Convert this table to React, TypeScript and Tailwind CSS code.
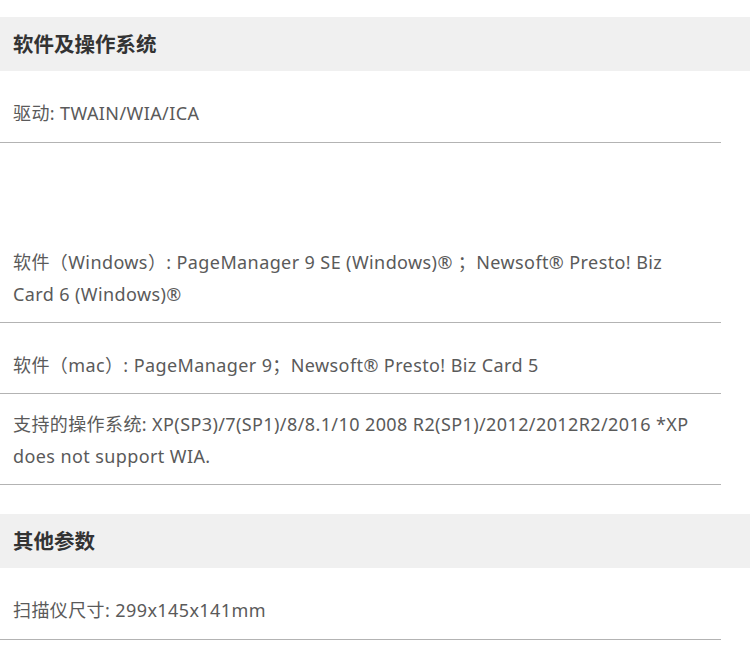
import React from "react";

const font = {
  fontFamily: '"Segoe UI", "Noto Sans", "Noto Sans CJK SC", sans-serif',
};

function Header({ title, className = "" }: { title: string; className?: string }) {
  return (
    <div className={`h-[54px] bg-[#f0f0f0] flex items-center px-[13px] ${className}`}>
      <h3 className="text-[20.5px] font-bold text-[#333333] leading-none">{title}</h3>
    </div>
  );
}

function Row({ children, pt, pb = "pb-[12px]" }: { children: React.ReactNode; pt: string; pb?: string }) {
  return (
    <div className={`w-[721px] border-b border-[#b3b3b3] px-[13px] ${pb} ${pt}`}>
      <p className="text-[18px] leading-[32px] tracking-[0.4px] text-[#5a5a5a] whitespace-nowrap">{children}</p>
    </div>
  );
}

export default function App() {
  return (
    <div className="w-[750px] h-[665px] bg-white overflow-hidden pt-[17px]" style={font}>
      <Header title="软件及操作系统" />
      <Row pt="pt-[26px]" pb="pb-[13px]">驱动: TWAIN/WIA/ICA</Row>
      <Row pt="pt-[103px]">
        软件（Windows）: PageManager 9 SE (Windows)® ；Newsoft® Presto! Biz
        <br />
        Card 6 (Windows)®
      </Row>
      <Row pt="pt-[26px]">软件（mac）: PageManager 9；Newsoft® Presto! Biz Card 5</Row>
      <Row pt="pt-[14px]">
        支持的操作系统: XP(SP3)/7(SP1)/8/8.1/10 2008 R2(SP1)/2012/2012R2/2016 *XP
        <br />
        does not support WIA.
      </Row>
      <Header title="其他参数" className="mt-[29px]" />
      <Row pt="pt-[26px]" pb="pb-[13px]">扫描仪尺寸: 299x145x141mm</Row>
    </div>
  );
}
